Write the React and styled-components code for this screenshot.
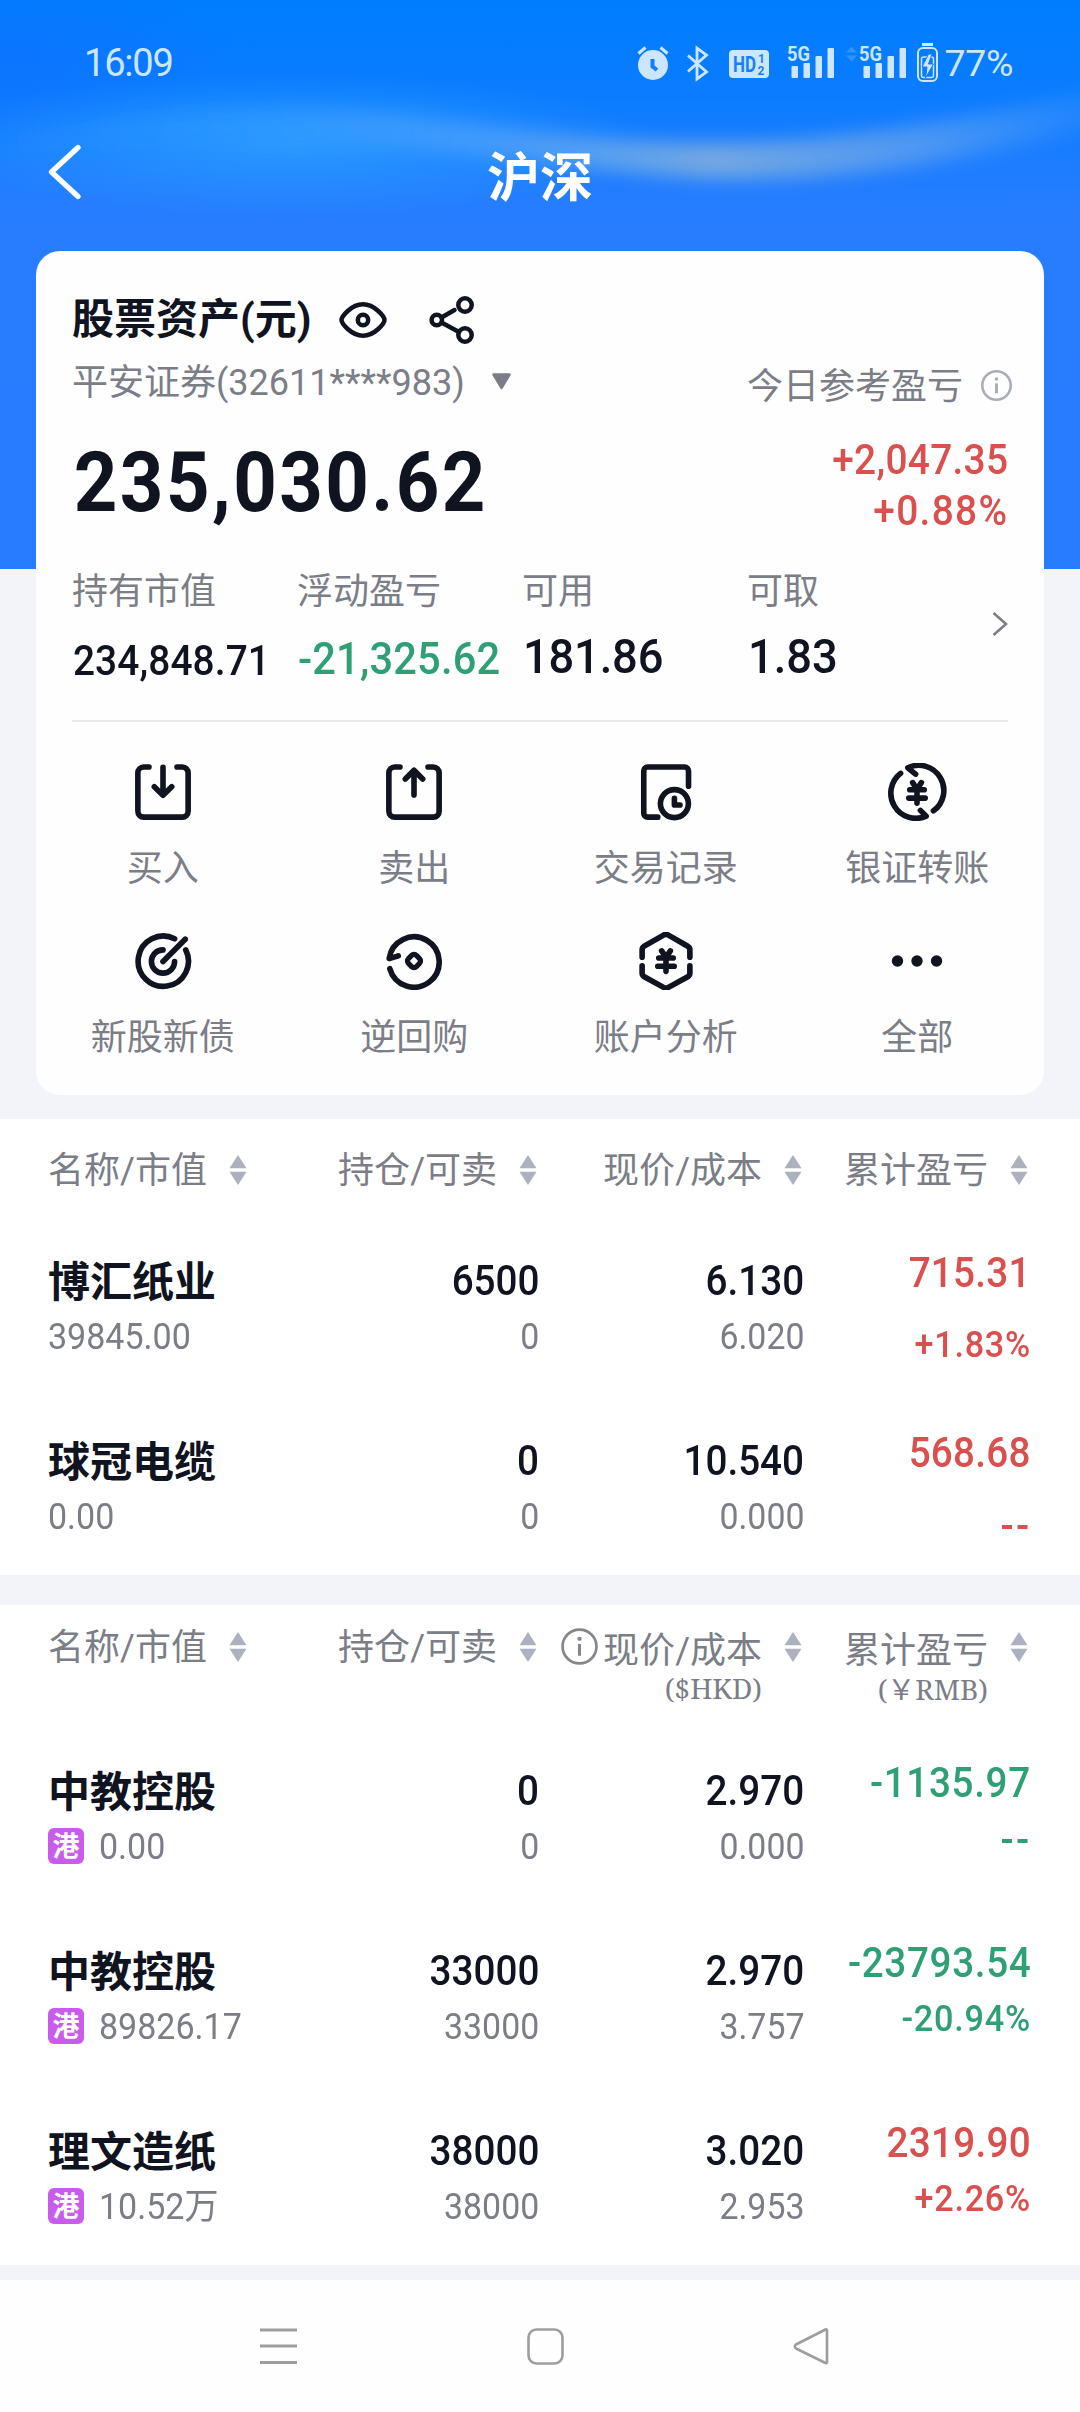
import React from "react";
import styled, { createGlobalStyle } from "styled-components";

const GlobalStyle = createGlobalStyle`
  * {
    box-sizing: border-box;
  }

  body {
    margin: 0;
    background: #f3f4f9;
    font-family: "Noto Sans CJK SC", sans-serif;
    color: #101320;
  }
`;

const RED = "#d9504f";
const GREEN = "#2f9f74";
const GRAY = "#7b7d87";

const Page = styled.div`
  width: 1080px;
  height: 2412px;
  display: flex;
  flex-direction: column;
  overflow: hidden;
`;

//TOP AREA
const Hero = styled.div`
  position: relative;
  height: 1119px;
  background: linear-gradient(
      180deg,
      #007dff 0px,
      #0a7cff 90px,
      #287dff 215px,
      #287cff 569px,
      #f3f4f9 569px
    )
    no-repeat;
`;

const Glow = styled.svg`
  position: absolute;
  left: 0;
  top: 0;
`;

const HeroContent = styled.div`
  position: relative;
  display: flex;
  flex-direction: column;
`;

const StatusBar = styled.div`
  height: 124px;
  padding: 2px 67px 0 84px;
  display: flex;
  align-items: center;
  justify-content: space-between;
`;

const StatusText = styled.span`
  font-family: Roboto, sans-serif;
  font-size: ${({ $size }) => $size}px;
  letter-spacing: ${({ $spacing }) => $spacing}px;
  line-height: 50px;
  color: #cce6ff;
`;

const StatusIcons = styled.div`
  display: flex;
  align-items: center;
  gap: 7px;
`;

const TitleBar = styled.div`
  height: 127px;
  padding: 0 47px 28px;
  display: grid;
  grid-template-columns: 60px 1fr 60px;
  align-items: center;
`;

const BackIcon = styled.svg`
  margin-bottom: 3px;
`;

const Title = styled.h1`
  margin: 0;
  font-size: 53px;
  font-weight: 700;
  line-height: 60px;
  text-align: center;
  color: #fff;
`;

//ASSET CARD
const Card = styled.div`
  width: 1008px;
  height: 844px;
  margin: 0 36px;
  padding-top: 37px;
  border-radius: 24px;
  background: #fefefe;
`;

const CardInner = styled.div`
  padding: 0 36px;
`;

const CardTitle = styled.div`
  height: 64px;
  display: flex;
  align-items: center;
`;

const CardName = styled.span`
  width: 267px;
  font-family: Roboto, "Noto Sans CJK SC", sans-serif;
  font-size: 42px;
  font-weight: 700;
  line-height: 60px;
  white-space: nowrap;
`;

const ShareSlot = styled.div`
  display: flex;
  margin-left: 42px;
`;

const AccountRow = styled.div`
  height: 60px;
  display: flex;
  align-items: center;
  justify-content: space-between;
  font-size: 36px;
  line-height: 60px;
  color: ${GRAY};
`;

const Account = styled.div`
  display: flex;
  align-items: center;
  gap: 27px;
  padding-top: 2px;
  font-family: Roboto, "Noto Sans CJK SC", sans-serif;

  svg {
    margin-bottom: 3px;
  }
`;

const TodayLabel = styled.div`
  display: flex;
  align-items: center;
  gap: 18px;
  padding-top: 2px;
  margin-right: -4px;

  svg {
    margin-top: 4px;
  }
`;

const TotalRow = styled.div`
  height: 140px;
  display: flex;
  justify-content: space-between;
`;

//digits are squeezed a little to get the narrow figures
const Total = styled.div`
  padding: 26px 0 0 2px;
  font-family: Roboto, sans-serif;
  font-size: 84px;
  font-weight: 700;
  line-height: 90px;
  letter-spacing: 2.7px;
  transform: scaleX(0.905);
  transform-origin: left;
`;

const Today = styled.div`
  padding-top: 22px;
  text-align: right;
  font-family: Roboto, sans-serif;
  font-size: 42px;
  font-weight: 500;
  line-height: 51px;
  color: ${RED};
  transform: scaleX(0.925);
  transform-origin: right;
`;

const TodayLine = styled.div`
  letter-spacing: ${({ $spacing }) => $spacing}px;
`;

const Stats = styled.div`
  height: 170px;
  padding-top: 8px;
  display: grid;
  grid-template-columns: repeat(4, 225px) 36px;
  border-bottom: 2px solid #e8e8eb;
`;

const StatLabel = styled.div`
  font-size: 36px;
  line-height: 56px;
  color: ${GRAY};
`;

const StatValue = styled.div`
  height: 80px;
  padding: 2px 0 0 1px;
  font-family: Roboto, sans-serif;
  font-size: ${({ $size }) => $size}px;
  font-weight: 500;
  line-height: ${({ $line }) => $line}px;
  letter-spacing: ${({ $spacing }) => $spacing}px;
  white-space: nowrap;
  color: ${({ $color }) => $color || "#101320"};
  transform: scaleX(0.925);
  transform-origin: left;
`;

const StatArrow = styled.div`
  padding-top: 51px;
  margin-left: 19px;
`;

const Actions = styled.div`
  padding: 41px 1px 0;
  display: grid;
  grid-template-columns: repeat(4, 251.5px);
  row-gap: 40px;
`;

const Action = styled.div`
  height: 129px;
  display: flex;
  flex-direction: column;
  align-items: center;
  gap: 17px;
  font-size: 36px;
  line-height: 54px;
  color: ${GRAY};
`;

//HOLDINGS
const Section = styled.div`
  background: #fff;
  margin-bottom: ${({ $gap }) => $gap}px;
`;

const Columns = styled.div`
  display: grid;
  grid-template-columns: 290px 199px 265px 226px;
  padding: 0 52px 0 48px;
`;

const TableHead = styled(Columns)`
  height: ${({ $height }) => $height}px;
  padding-top: ${({ $top }) => $top}px;
  font-size: 36px;
  line-height: 42px;
  color: ${GRAY};
`;

const HeadCell = styled.div`
  display: flex;
  align-items: flex-start;
  justify-content: ${({ $left }) => ($left ? "flex-start" : "flex-end")};
  white-space: nowrap;
`;

const HeadLabel = styled.div`
  display: flex;
  flex-direction: column;
  align-items: flex-end;
  padding-top: ${({ $drop }) => $drop || 0}px;
`;

const Slash = styled.span`
  font-family: Roboto, sans-serif;
`;

const Currency = styled.span`
  margin-top: ${({ $top }) => $top}px;
  font-family: "Noto Serif", "Liberation Serif", "Noto Sans CJK SC", serif;
  font-size: 28px;
  line-height: 30px;
`;

const SortIcon = styled.svg`
  margin: 9px 0 0 22px;
  flex: none;
`;

const InfoSlot = styled.div`
  display: flex;
  padding: 5px 5px 0 0;
`;

const Row = styled(Columns)`
  height: 180px;
`;

const Cell = styled.div`
  display: flex;
  flex-direction: column;
  align-items: ${({ $left }) => ($left ? "flex-start" : "flex-end")};
  padding-top: ${({ $top }) => $top || 37}px;
  gap: ${({ $gap }) => $gap || 0}px;
  color: ${({ $color }) => $color || "#101320"};
  white-space: nowrap;
`;

const StockName = styled.div`
  font-size: 42px;
  font-weight: 700;
  line-height: 54px;
  height: 57px;
`;

const MainNum = styled.div`
  height: 57px;
  margin-right: -2px;
  font-family: Roboto, sans-serif;
  font-size: 42px;
  font-weight: 500;
  line-height: 58px;
  transform: scaleX(0.92);
  transform-origin: right;
`;

const Profit = styled(MainNum)`
  margin-right: -3px;
  letter-spacing: ${({ $loss }) => ($loss ? 0.7 : 0.3)}px;
`;

const SubLine = styled.div`
  display: flex;
  align-items: center;
`;

const SubNum = styled.div`
  margin-right: -2px;
  font-family: Roboto, "Noto Sans CJK SC", sans-serif;
  font-size: 36px;
  line-height: 56px;
  color: ${GRAY};
  transform: scaleX(${({ $left }) => ($left ? 0.945 : 0.94)});
  transform-origin: ${({ $left }) => ($left ? "left" : "right")};
`;

const Rate = styled(SubNum)`
  height: 56px;
  margin-right: -3px;
  font-size: 37px;
  font-weight: 500;
  letter-spacing: 0.8px;
  color: ${({ $color }) => $color};
  transform: scaleX(0.925);
`;

const Dashes = styled(Rate)`
  padding-top: 1px;
  font-size: 42px;
  letter-spacing: 2.5px;
  margin-right: -4px;
`;

const Market = styled.span`
  width: 36px;
  height: 36px;
  margin: -2px 15px 0 0;
  border-radius: 6px;
  background: #c95ceb;
  color: #fff;
  font-size: 27px;
  font-weight: 700;
  line-height: 34px;
  text-align: center;
`;

//SYSTEM NAV
const NavBar = styled.div`
  height: 132px;
  padding: 47px 251px 0 260px;
  background: #fefefe;
  display: flex;
  justify-content: space-between;
`;

const Stroke = ({ children }) => (
  <svg
    width="60"
    height="60"
    viewBox="0 0 60 60"
    fill="none"
    stroke="#101320"
    strokeWidth="5.8"
    strokeLinecap="round"
    strokeLinejoin="round"
  >
    {children}
  </svg>
);

const Yen = ({ y = 0 }) => (
  <path
    transform={`translate(0 ${y})`}
    d="M25.5 20.3L30 27L34.5 20.3M22.5 27.7H37.5M21.5 36.3H38.5M30 27V41.5"
  />
);

const actions = [
  {
    label: "买入",
    icon: (
      <>
        <path d="M15.5 4.2H10a6 6 0 0 0-6 6V50a6 6 0 0 0 6 6h40a6 6 0 0 0 6-6V10.2a6 6 0 0 0-6-6h-5.5" />
        <path d="M30 4.5V33M21 24.5l9 9 9-9" />
      </>
    ),
  },
  {
    label: "卖出",
    icon: (
      <>
        <path d="M15.5 4.2H10a6 6 0 0 0-6 6V50a6 6 0 0 0 6 6h40a6 6 0 0 0 6-6V10.2a6 6 0 0 0-6-6h-5.5" />
        <path d="M30 33V8M21 16.5l9-9 9 9" />
      </>
    ),
  },
  {
    label: "交易记录",
    icon: (
      <>
        <path d="M21.5 56H11a4 4 0 0 1-4-4V8.2a4 4 0 0 1 4-4h38.3a4 4 0 0 1 4 4V24" />
        <circle cx="38.7" cy="42" r="14.5" />
        <path d="M38.7 36.5v7h5.8" />
      </>
    ),
  },
  {
    label: "银证转账",
    icon: (
      <>
        <path d="M13 10.7A26 26 0 0 0 39.5 55L33.5 49" />
        <path d="M47 49.5A26 26 0 0 0 20.5 5L28.5 11.5" />
        <Yen />
      </>
    ),
  },
  {
    label: "新股新债",
    icon: (
      <>
        <path d="M42 7A26 26 0 1 0 53.5 18.5" />
        <path d="M30 18.5A12 12 0 1 0 42 30.5" />
        <path d="M30 30.5L53 7.5" />
      </>
    ),
  },
  {
    label: "逆回购",
    icon: (
      <>
        <path d="M5 38A26 26 0 1 0 4.3 27.5L13.7 24.7" />
        <rect
          x="24.2"
          y="24.2"
          width="11.6"
          height="11.6"
          rx="3.5"
          strokeWidth="5.4"
          transform="rotate(45 30 30)"
        />
      </>
    ),
  },
  {
    label: "账户分析",
    icon: (
      <>
        <path d="M5.3 26V18.5q0-2.5 2.2-3.8L27.5 3.2q2.5-1.4 5 0L52.5 14.7q2.2 1.3 2.2 3.8V26" />
        <path d="M5.3 35V42.5q0 2.5 2.2 3.8L27.5 57.3q2.5 1.4 5 0L52.5 46.3q2.2-1.3 2.2-3.8V35" />
        <Yen y={-0.8} />
      </>
    ),
  },
  {
    label: "全部",
    icon: (
      <g fill="#101320" stroke="none">
        <circle cx="9.8" cy="30" r="5.9" />
        <circle cx="30" cy="30" r="5.9" />
        <circle cx="50.2" cy="30" r="5.9" />
      </g>
    ),
  },
];

const stats = [
  { label: "持有市值", value: "234,848.71", size: 42, line: 86, spacing: 0.1 },
  {
    label: "浮动盈亏",
    value: "-21,325.62",
    size: 45,
    line: 82,
    spacing: 0.2,
    color: GREEN,
  },
  { label: "可用", value: "181.86", size: 49, line: 77, spacing: -0.2 },
  { label: "可取", value: "1.83", size: 49, line: 77, spacing: 0 },
];

const mainland = [
  {
    name: "博汇纸业",
    worth: "39845.00",
    hold: "6500",
    sellable: "0",
    price: "6.130",
    cost: "6.020",
    profit: "715.31",
    rate: "+1.83%",
    color: RED,
  },
  {
    name: "球冠电缆",
    worth: "0.00",
    hold: "0",
    sellable: "0",
    price: "10.540",
    cost: "0.000",
    profit: "568.68",
    rate: "--",
    color: RED,
  },
];

const hongkong = [
  {
    name: "中教控股",
    worth: "0.00",
    hold: "0",
    sellable: "0",
    price: "2.970",
    cost: "0.000",
    profit: "-1135.97",
    rate: "--",
    color: GREEN,
  },
  {
    name: "中教控股",
    worth: "89826.17",
    hold: "33000",
    sellable: "33000",
    price: "2.970",
    cost: "3.757",
    profit: "-23793.54",
    rate: "-20.94%",
    color: GREEN,
  },
  {
    name: "理文造纸",
    worth: "10.52万",
    hold: "38000",
    sellable: "38000",
    price: "3.020",
    cost: "2.953",
    profit: "2319.90",
    rate: "+2.26%",
    color: RED,
  },
];

const InfoIcon = ({ size, color, width }) => (
  <svg width={size} height={size} viewBox="0 0 36 36" fill="none">
    <circle cx="18" cy="18" r="16.5" stroke={color} strokeWidth={width} />
    <circle cx="18" cy="10.5" r="2.1" fill={color} />
    <path d="M18 15.5V27" stroke={color} strokeWidth={width * 1.15} />
  </svg>
);

const Sort = () => (
  <SortIcon width="18" height="30" viewBox="0 0 18 30" fill="#adb0be">
    <path d="M9 0L17.5 13.2H.5z" />
    <path d="M9 30L17.5 16.8H.5z" />
  </SortIcon>
);

const StatusGroup = () => (
  <StatusIcons>
    <svg width="302" height="44" viewBox="636 40 302 44" fill="none">
      {/* alarm */}
      <circle cx="653" cy="64" r="15" fill="#cce6ff" />
      <path
        d="M638.5 52.5l7-6M667.5 52.5l-7-6"
        stroke="#cce6ff"
        strokeWidth="3"
      />
      <path d="M652.5 58v7.5l4.5 3.5" stroke="#117dff" strokeWidth="4" />
      {/* bluetooth */}
      <path
        d="M688 54.5L706.5 71L697 78V47L706.5 54L688 70.5"
        stroke="#cce6ff"
        strokeWidth="2.8"
      />
      {/* hd calling */}
      <rect x="729" y="49" width="40" height="28" rx="4" fill="#cce6ff" />
      <g fontFamily="Roboto, sans-serif" fontWeight="700" fill="#1480ff">
        <text
          x="733"
          y="71"
          fontSize="22"
          textLength="23"
          lengthAdjust="spacingAndGlyphs"
        >
          HD
        </text>
        <text x="758" y="61.5" fontSize="12">
          1
        </text>
        <text x="757.5" y="73.5" fontSize="12">
          2
        </text>
      </g>
      {/* two sims */}
      {[788, 860].map((x) => (
        <g key={x} fill="#cce6ff">
          <text
            x={x - 1}
            y="60"
            fontFamily="Roboto, sans-serif"
            fontSize="21"
            fontWeight="700"
            textLength="23"
            lengthAdjust="spacingAndGlyphs"
          >
            5G
          </text>
          <rect x={x + 3.5} y="65" width="6.5" height="12" rx="1" />
          <rect x={x + 15.5} y="62" width="6.5" height="15" rx="1" />
          <rect x={x + 27.5} y="55" width="6.5" height="22" rx="1" />
          <rect x={x + 39.5} y="47" width="6.5" height="30" rx="1" />
        </g>
      ))}
      <path d="M851.5 45.5l5.5 6h-11zM851.5 60.5l5.5-6h-11z" fill="#2f93ff" />
      {/* battery */}
      <rect x="922" y="42" width="11" height="3" fill="#cce6ff" />
      <rect
        x="918"
        y="47"
        width="19"
        height="33"
        rx="5"
        stroke="#cce6ff"
        strokeWidth="2"
      />
      <rect
        x="921.5"
        y="56"
        width="12"
        height="20.5"
        rx="2"
        stroke="#cce6ff"
        strokeWidth="1.5"
      />
      <path
        d="M928.5 53l-6.5 13h5l-1.5 11 8-14h-5l3.5-10z"
        fill="#cce6ff"
        stroke="#117dff"
        strokeWidth="1"
      />
    </svg>
    <StatusText $size={37.5} $spacing={-0.4}>
      77%
    </StatusText>
  </StatusIcons>
);

const Head = ({ hk }) => (
  <TableHead $height={hk ? 120 : 96} $top={hk ? 18 : 27}>
    <HeadCell $left>
      <HeadLabel>
        <span>
          名称<Slash>/</Slash>市值
        </span>
      </HeadLabel>
      <Sort />
    </HeadCell>
    <HeadCell>
      <HeadLabel>
        <span>
          持仓<Slash>/</Slash>可卖
        </span>
      </HeadLabel>
      <Sort />
    </HeadCell>
    <HeadCell>
      {hk && (
        <InfoSlot>
          <InfoIcon size={37} color="#85868c" width={2.6} />
        </InfoSlot>
      )}
      <HeadLabel $drop={hk ? 3 : 0}>
        <span>
          现价<Slash>/</Slash>成本
        </span>
        {hk && <Currency $top={1}>($HKD)</Currency>}
      </HeadLabel>
      <Sort />
    </HeadCell>
    <HeadCell>
      <HeadLabel $drop={hk ? 3 : 0}>
        <span>累计盈亏</span>
        {hk && <Currency $top={6}>(￥RMB)</Currency>}
      </HeadLabel>
      <Sort />
    </HeadCell>
  </TableHead>
);

const Holding = ({ stock, hk }) => {
  const RateText = stock.rate === "--" ? Dashes : Rate;

  return (
    <Row>
      <Cell $left>
        <StockName>{stock.name}</StockName>
        <SubLine>
          {hk && <Market>港</Market>}
          <SubNum $left>{stock.worth}</SubNum>
        </SubLine>
      </Cell>
      <Cell>
        <MainNum>{stock.hold}</MainNum>
        <SubNum>{stock.sellable}</SubNum>
      </Cell>
      <Cell>
        <MainNum>{stock.price}</MainNum>
        <SubNum>{stock.cost}</SubNum>
      </Cell>
      <Cell $top={29} $gap={hk ? 0 : 16} $color={stock.color}>
        <Profit $loss={stock.profit[0] === "-"}>{stock.profit}</Profit>
        <RateText $color={stock.color}>{stock.rate}</RateText>
      </Cell>
    </Row>
  );
};

const HeroGlow = () => (
  <Glow width="1080" height="251" viewBox="0 0 1080 251" fill="none">
    <defs>
      <linearGradient
        id="wave"
        x1="0"
        y1="0"
        x2="1080"
        y2="0"
        gradientUnits="userSpaceOnUse"
      >
        <stop offset="0" stopColor="#1f90ff" stopOpacity="0.1" />
        <stop offset="0.25" stopColor="#2f9bff" stopOpacity="0.7" />
        <stop offset="0.45" stopColor="#4b9ffa" stopOpacity="0.8" />
        <stop offset="0.66" stopColor="#74a8e2" stopOpacity="1" />
        <stop offset="0.85" stopColor="#5b9ef0" stopOpacity="0.8" />
        <stop offset="1" stopColor="#3f97fa" stopOpacity="0.35" />
      </linearGradient>
      <radialGradient id="pool">
        <stop offset="0" stopColor="#2c9bff" stopOpacity="0.9" />
        <stop offset="1" stopColor="#2c9bff" stopOpacity="0" />
      </radialGradient>
      <radialGradient id="corner">
        <stop offset="0" stopColor="#1668ff" stopOpacity="0.4" />
        <stop offset="1" stopColor="#1668ff" stopOpacity="0" />
      </radialGradient>
      <filter id="soft" x="-10%" y="-50%" width="120%" height="200%">
        <feGaussianBlur stdDeviation="9" />
      </filter>
    </defs>
    <ellipse cx="0" cy="60" rx="240" ry="90" fill="url(#corner)" />
    <ellipse cx="290" cy="145" rx="370" ry="72" fill="url(#pool)" />
    <path
      d="M-20 140C140 108 300 103 420 118S620 143 720 143S940 125 1100 90V125C960 165 820 184 700 178S440 144 300 142S100 146 -20 156z"
      fill="url(#wave)"
      filter="url(#soft)"
    />
  </Glow>
);

const App = () => {
  return (
    <Page>
      <GlobalStyle />
      <Hero>
        <HeroGlow />
        <HeroContent>
          <StatusBar>
            <StatusText $size={38} $spacing={-1.2}>
              16:09
            </StatusText>
            <StatusGroup />
          </StatusBar>
          <TitleBar>
            <BackIcon width="34" height="56" viewBox="0 0 34 56" fill="none">
              <path
                d="M31 3.5L4.5 28L31 52.5"
                stroke="#fff"
                strokeWidth="5.2"
                strokeLinecap="round"
                strokeLinejoin="round"
              />
            </BackIcon>
            <Title>沪深</Title>
          </TitleBar>
          <Card>
            <CardInner>
              <CardTitle>
                <CardName>股票资产(元)</CardName>
                <svg
                  width="48"
                  height="36"
                  viewBox="0 0 48 36"
                  fill="none"
                  stroke="#101320"
                  strokeWidth="4.5"
                >
                  <path d="M2.5 18C2.5 15 12 2.3 24 2.3S45.5 15 45.5 18S36 33.7 24 33.7S2.5 21 2.5 18z" />
                  <circle cx="24" cy="18" r="5.2" />
                </svg>
                <ShareSlot>
                  <svg
                    width="46"
                    height="48"
                    viewBox="0 0 46 48"
                    fill="none"
                    stroke="#101320"
                    strokeWidth="4.5"
                  >
                    <circle cx="7.8" cy="24" r="5.2" />
                    <circle cx="36" cy="9" r="6.7" />
                    <circle cx="36" cy="39" r="6.7" />
                    <path
                      d="M12.5 21.5L25.5 14M12.5 26.5L30 36"
                      strokeLinecap="round"
                    />
                  </svg>
                </ShareSlot>
              </CardTitle>
              <AccountRow>
                <Account>
                  平安证券(32611****983)
                  <svg width="19" height="17" viewBox="0 0 18 16">
                    <path
                      d="M1.5 1.5h15L9 14z"
                      fill={GRAY}
                      stroke={GRAY}
                      strokeWidth="2.5"
                      strokeLinejoin="round"
                    />
                  </svg>
                </Account>
                <TodayLabel>
                  今日参考盈亏
                  <InfoIcon size={31} color="#a9adb9" width={3} />
                </TodayLabel>
              </AccountRow>
              <TotalRow>
                <Total>235,030.62</Total>
                <Today>
                  <TodayLine $spacing={0.3}>+2,047.35</TodayLine>
                  <TodayLine $spacing={1.4}>+0.88%</TodayLine>
                </Today>
              </TotalRow>
              <Stats>
                {stats.map((item) => (
                  <div key={item.label}>
                    <StatLabel>{item.label}</StatLabel>
                    <StatValue
                      $size={item.size}
                      $line={item.line}
                      $spacing={item.spacing}
                      $color={item.color}
                    >
                      {item.value}
                    </StatValue>
                  </div>
                ))}
                <StatArrow>
                  <svg width="18" height="26" viewBox="0 0 18 26" fill="none">
                    <path
                      d="M2.5 2L15 13L2.5 24"
                      stroke={GRAY}
                      strokeWidth="2.6"
                    />
                  </svg>
                </StatArrow>
              </Stats>
            </CardInner>
            <Actions>
              {actions.map((item) => (
                <Action key={item.label}>
                  <Stroke>{item.icon}</Stroke>
                  {item.label}
                </Action>
              ))}
            </Actions>
          </Card>
        </HeroContent>
      </Hero>

      <Section $gap={30}>
        <Head />
        {mainland.map((stock) => (
          <Holding key={stock.name} stock={stock} />
        ))}
      </Section>
      <Section $gap={15}>
        <Head hk />
        {hongkong.map((stock, i) => (
          <Holding key={i} stock={stock} hk />
        ))}
      </Section>

      <NavBar>
        <svg
          width="37"
          height="38"
          viewBox="0 0 37 38"
          stroke="#9d9d9d"
          strokeWidth="3"
        >
          <path d="M0 3H37M0 19H37M0 35.5H37" />
        </svg>
        <svg
          width="37"
          height="38"
          viewBox="0 0 37 38"
          fill="none"
          stroke="#9d9d9d"
          strokeWidth="2.6"
        >
          <rect x="1.5" y="2.5" width="34" height="34" rx="8" />
        </svg>
        <svg
          width="36"
          height="38"
          viewBox="0 0 36 38"
          fill="none"
          stroke="#9d9d9d"
          strokeWidth="2.6"
        >
          <path
            d="M34 4v31q0 1.5-1.5 1L3 21.5q-2.5-2 0-4L32.5 2.5q1.5-.5 1.5 1.5z"
            strokeLinejoin="round"
          />
        </svg>
      </NavBar>
    </Page>
  );
};

export default App;
